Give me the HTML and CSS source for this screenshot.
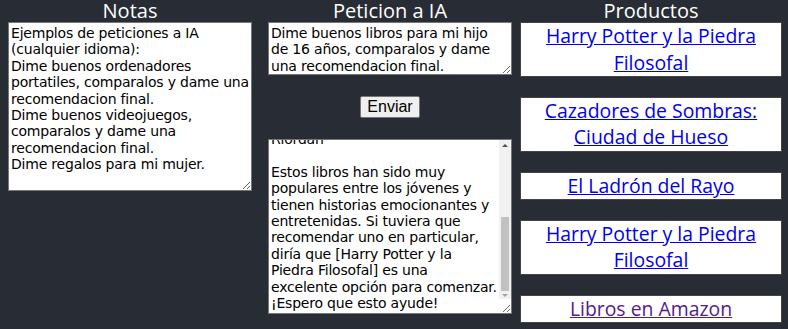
FILE: index.html
```html
<!DOCTYPE html>
<html lang="es">
<head>
    <meta charset="UTF-8">
    <meta name="viewport" content="width=device-width, initial-scale=1.0">
    <title>Peticiones a IA</title>
    <link rel="stylesheet" href="styles.css">
</head>
<body>
    <div class="app">
        <section class="col">
            <h2>Notas</h2>
            <textarea class="caja notas" wrap="off" spellcheck="false">Ejemplos de peticiones a IA
(cualquier idioma):
Dime buenos ordenadores
portatiles, comparalos y dame una
recomendacion final.
Dime buenos videojuegos,
comparalos y dame una
recomendacion final.
Dime regalos para mi mujer.</textarea>
        </section>

        <section class="col">
            <h2>Peticion a IA</h2>
            <textarea class="caja peticion" wrap="off" spellcheck="false">Dime buenos libros para mi hijo
de 16 años, comparalos y dame
una recomendacion final.</textarea>
            <button class="enviar">Enviar</button>
            <div class="respuesta-caja">
                <textarea id="respuesta" class="caja respuesta" wrap="off" spellcheck="false" readonly>Aquí tienes algunas
recomendaciones de libros
para un chico de 16 años:

1. [Harry Potter y la Piedra
Filosofal] de J.K. Rowling

2. [Cazadores de Sombras:
Ciudad de Hueso] de Cassandra
Clare

3. [El Ladrón del Rayo] de Rick
Riordan

Estos libros han sido muy
populares entre los jóvenes y
tienen historias emocionantes y
entretenidas. Si tuviera que
recomendar uno en particular,
diría que [Harry Potter y la
Piedra Filosofal] es una
excelente opción para comenzar.
¡Espero que esto ayude!</textarea>
                <div class="barra">
                    <span class="flecha arriba"></span>
                    <span class="pulgar"></span>
                    <span class="flecha abajo"></span>
                </div>
            </div>
        </section>

        <section class="col productos">
            <h2>Productos</h2>
            <div class="producto"><a href="#">Harry Potter y la Piedra Filosofal</a></div>
            <div class="producto"><a href="#">Cazadores de Sombras: Ciudad de Hueso</a></div>
            <div class="producto"><a href="#">El Ladrón del Rayo</a></div>
            <div class="producto"><a href="#">Harry Potter y la Piedra Filosofal</a></div>
            <div class="producto"><a href="#" class="visitado">Libros en Amazon</a></div>
        </section>
    </div>
    <script src="script.js"></script>
</body>
</html>
```

FILE: styles.css
```css
body {
    margin: 0;
    background-color: #282c34;
    font-family: "Open Sans", "Noto Sans", sans-serif;
    color: white;
}
.app {
    display: grid;
    grid-template-columns: 260px 260px 262px;
}
.col {
    display: flex;
    flex-direction: column;
    align-items: center;
}
h2 {
    margin: 0;
    font-size: 20px;
    font-weight: normal;
    line-height: 22px;
}
.caja {
    width: 244px;
    box-sizing: border-box;
    margin: 0;
    padding: 2px;
    border: 1px solid #767676;
    background: white;
    color: black;
    font-family: "DejaVu Sans", Verdana, sans-serif;
    font-size: 14px;
    letter-spacing: -0.2px;
    line-height: 16.4px;
    overflow: hidden;
}
.notas {
    height: 169px;
}
.peticion {
    height: 53px;
}
.enviar {
    margin: 21px 0;
    padding: 1px 6px;
    border: 1px solid #767676;
    border-radius: 2px;
    background: #efefef;
    color: black;
    font-family: "Liberation Sans", Arial, sans-serif;
    font-size: 16px;
    height: 22px;
    line-height: 18px;
}
.respuesta-caja {
    position: relative;
    height: 175px;
}
.respuesta {
    display: block;
    height: 175px;
}
.barra {
    position: absolute;
    top: 1px;
    right: 1px;
    bottom: 15px;
    width: 12px;
    background: #f1f1f1;
    display: flex;
    flex-direction: column;
    align-items: center;
    pointer-events: none;
}
.flecha {
    width: 0;
    height: 0;
    border-left: 3px solid transparent;
    border-right: 3px solid transparent;
}
.arriba {
    margin-top: 4px;
    border-bottom: 3px solid #505050;
}
.abajo {
    margin-top: 3px;
    border-top: 3px solid #a3a3a3;
}
.pulgar {
    width: 8px;
    height: 74px;
    margin-top: 70px;
    background: #c1c1c1;
}
.productos {
    align-items: stretch;
    gap: 19.6px;
}
.productos h2 {
    text-align: center;
    margin-bottom: -19.6px;
}
.producto {
    background: white;
    border: 1px solid #444;
    text-align: center;
    font-size: 19.4px;
    line-height: 26.6px;
}
.producto a {
    color: #0000ee;
}
.producto a.visitado {
    color: #551a8b;
}
```

FILE: script.js
```js
const respuesta = document.getElementById("respuesta");
respuesta.scrollTop = respuesta.scrollHeight;
```
